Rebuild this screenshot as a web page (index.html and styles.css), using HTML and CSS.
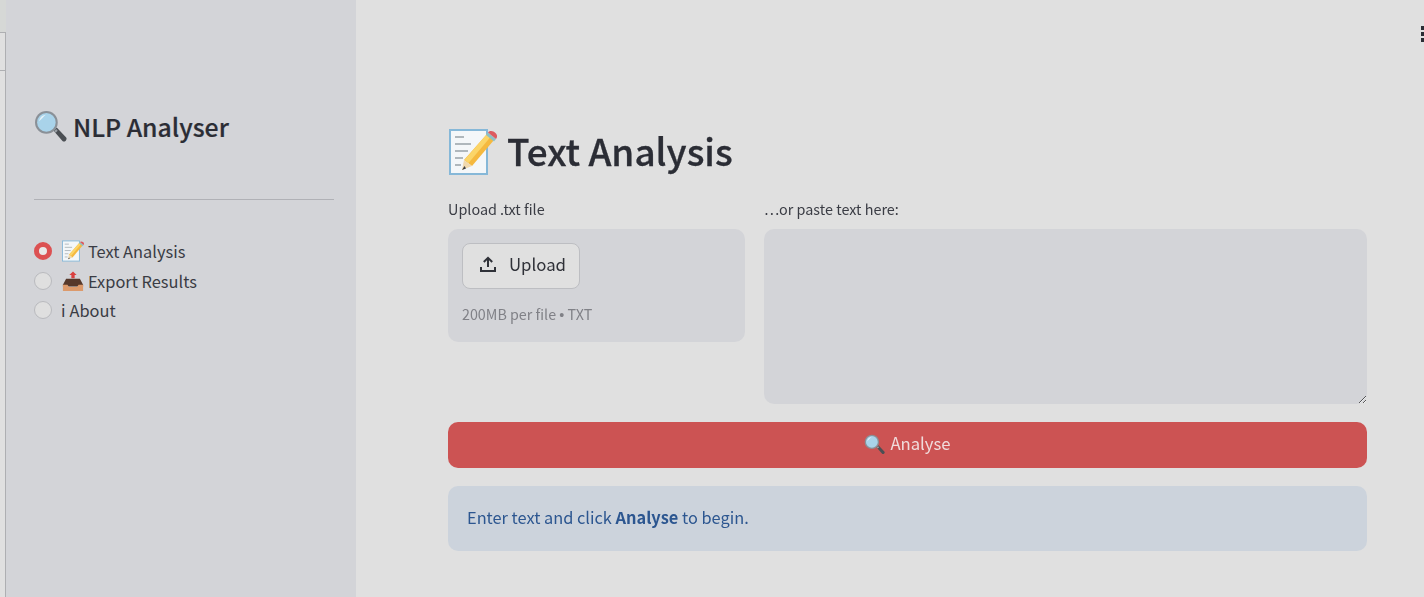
FILE: index.html
```html
<!DOCTYPE html>
<html lang="en">

<head>
    <meta charset="UTF-8">
    <title>NLP Analyser</title>
    <link rel="stylesheet" href="styles.css">
</head>

<body>

    <svg class="defs" width="0" height="0">
        <defs>
            <symbol id="lens" viewBox="0 0 32 32">
                <path d="M19 20l3-3 9 9.500c1 1 .6 2.300-.2 3.200-.9.900-2.300 1.200-3.200.3z" fill="#4b4f54"/>
                <path d="M19.500 20.500l2-2 1.500 1.500-2 2z" fill="#9aa0a6"/>
                <circle cx="12" cy="12" r="11" fill="#8a9097"/>
                <circle cx="12" cy="12" r="9" fill="#a9d3ea"/>
                <path d="M5 11c.5-3.500 3-6 6.500-6.300-2 1.600-4 3.800-6.500 6.300z" fill="#e4f2f9"/>
            </symbol>
            <symbol id="memo" viewBox="0 0 48 48">
                <rect x="1" y="2" width="37" height="44" fill="#f4f7f9" stroke="#86b8d8" stroke-width="2"/>
                <path d="M6 9h9M6 16h16M6 23h13M6 30h8M6 37h6" stroke="#98a2a8" stroke-width="1.500" fill="none"/>
                <path d="M38 6l7 6-22 26-8-6z" fill="#f5b93f"/>
                <path d="M38 6l3.500 3-22 26-4-3z" fill="#fbd568"/>
                <path d="M15 32l8 6-10 4z" fill="#f1d9ae"/>
                <path d="M15.500 38l-2.500 4 4-1.500z" fill="#3c3f44"/>
                <path d="M37 7l8 6.500 2-2.500-8-6.500z" fill="#8fc0c4"/>
                <path d="M39 4.500l8 6.500c1.500-2 1.500-4-.5-6s-5.500-3-7.500-.5z" fill="#dd5a5f"/>
            </symbol>
            <symbol id="outbox" viewBox="0 0 24 24">
                <path d="M12 1.500l4 4h-2.200v3.500h-3.600V5.500H8z" fill="#d9403f"/>
                <path d="M4.500 9.500h15l3.500 6.500v2H1v-2z" fill="#56382b"/>
                <path d="M1 16h5l1.500 2.500h9L18 16h5v7H1z" fill="#dc9a6c"/>
            </symbol>
        </defs>
    </svg>

    <div class="app">
        <div class="edge">
            <div class="edge-box"></div>
            <div class="edge-rest"></div>
        </div>

        <aside class="sidebar">
            <h2 class="brand">
                <svg class="emoji brand-icon"><use href="#lens"/></svg>
                NLP Analyser
            </h2>
            <hr class="rule">
            <div class="nav">
                <label class="nav-item">
                    <span class="radio radio-on"></span>
                    <svg class="emoji nav-icon"><use href="#memo"/></svg>
                    Text Analysis
                </label>
                <label class="nav-item">
                    <span class="radio"></span>
                    <svg class="emoji nav-icon"><use href="#outbox"/></svg>
                    Export Results
                </label>
                <label class="nav-item">
                    <span class="radio"></span>
                    <span class="info">i</span>
                    About
                </label>
            </div>
        </aside>

        <main class="main">
            <div class="kebab"><i></i><i></i><i></i></div>

            <h1 class="title">
                <svg class="emoji title-icon"><use href="#memo"/></svg>
                <span class="title-text">Text Analysis</span>
            </h1>

            <div class="inputs">
                <div class="upload-col">
                    <p class="field-label">Upload .txt file</p>
                    <div class="dropzone">
                        <button class="upload-btn">
                            <svg class="upload-icon" viewBox="0 0 16 16" fill="none" stroke="currentColor" stroke-width="2">
                                <path d="M8 11V2M3.800 6L8 1.800 12.200 6M1 11v4h14v-4"/>
                            </svg>
                            Upload
                        </button>
                        <p class="hint">200MB per file <span class="dot">•</span> TXT</p>
                    </div>
                </div>
                <div class="paste-col">
                    <p class="field-label">…or paste text here:</p>
                    <textarea class="paste"></textarea>
                </div>
            </div>

            <button class="analyse">
                <svg class="emoji analyse-icon"><use href="#lens"/></svg>
                Analyse
            </button>

            <div class="notice">Enter text and click <strong>Analyse</strong> to begin.</div>
        </main>
    </div>

</body>

</html>
```

FILE: styles.css
```css
* {
    box-sizing: border-box;
}

html,
body {
    height: 100%;
}

body {
    margin: 0;
    overflow: hidden;
    background: #e0e0e0;
    color: #2b2d35;
    font-family: "Noto Sans CJK SC", "Noto Sans", sans-serif;
}

.defs {
    position: absolute;
}

.emoji {
    flex: none;
}

.app {
    display: flex;
    height: 597px;
    filter: blur(0.4px);
}

.edge {
    display: flex;
    flex-direction: column;
    width: 6px;
    padding-top: 32px;
    background: #d6d8d6;
}

.edge-box {
    height: 39px;
    border: 1px solid #aeafb2;
    border-left: 0;
    background: #e0e0e0;
}

.edge-rest {
    flex: 1;
    border-right: 1px solid #aeafb2;
    background: #e0e0e0;
}

.sidebar {
    width: 350px;
    padding: 106px 22px 0 28px;
    background: #d3d4d8;
}

.brand {
    display: flex;
    align-items: center;
    gap: 6px;
    height: 40px;
    margin: 0;
    font-size: 24.800px;
    line-height: 40px;
    font-weight: 500;
    -webkit-text-stroke: 0.2px #2b2d35;
}

.brand-icon {
    width: 33px;
    height: 33px;
}

.rule {
    height: 1px;
    margin: 53px 0 39px;
    border: 0;
    background: #b0b1b6;
}

.nav {
    display: flex;
    flex-direction: column;
    gap: 5.500px;
}

.nav-item {
    display: flex;
    align-items: center;
    height: 24px;
    font-size: 16.400px;
    line-height: 24px;
    color: #3a3c44;
}

.radio {
    width: 18px;
    height: 18px;
    margin-right: 9px;
    border: 1px solid #b9babe;
    border-radius: 50%;
    background: #dfdfdf;
}

.radio-on {
    border: 5px solid #dc5152;
    background: #e9e9e9;
}

.nav-icon {
    width: 22px;
    height: 22px;
    margin: 0 4px 0 1px;
}

.info {
    margin-right: 4px;
}

.main {
    position: relative;
    flex: 1;
    min-width: 0;
    padding: 125px 57px 0 92px;
}

.kebab {
    position: absolute;
    top: 26px;
    right: 0;
    display: flex;
    flex-direction: column;
    gap: 2px;
}

.kebab i {
    width: 3px;
    height: 4px;
    background: #2b2d35;
}

.title {
    display: flex;
    align-items: center;
    gap: 10px;
    height: 54px;
    margin: 0 0 20px 1px;
    font-size: 36.900px;
    line-height: 54px;
    font-weight: 500;
    -webkit-text-stroke: 0.3px #2b2d35;
}

.title-text {
    margin-bottom: 4px;
}

.title-icon {
    width: 48px;
    height: 48px;
}

.inputs {
    display: flex;
    gap: 19px;
}

.upload-col {
    flex: none;
    width: 297px;
}

.paste-col {
    flex: 1;
    min-width: 0;
}

.field-label {
    height: 20px;
    margin: 0 0 10px;
    font-size: 14.400px;
    line-height: 20px;
    color: #3a3c44;
}

.dropzone {
    height: 113px;
    padding: 14px 14px 0;
    background: #d3d4d8;
    border-radius: 10px;
}

.upload-btn {
    display: flex;
    align-items: center;
    gap: 13px;
    width: 118px;
    height: 46px;
    padding: 0 0 4px 17px;
    background: #e0e0e0;
    border: 1px solid #bdbec2;
    border-radius: 8px;
    color: #2f3138;
    font-family: inherit;
    font-size: 16.800px;
}

.upload-icon {
    width: 16px;
    height: 16px;
}

.hint {
    margin: 14px 0 0;
    font-size: 14.300px;
    line-height: 22px;
    color: #808187;
}

.dot {
    font-family: "Liberation Sans", sans-serif;
}

.paste {
    display: block;
    width: 100%;
    height: 175px;
    background: #d3d4d8;
    border: 0;
    border-radius: 10px;
}

.analyse {
    display: flex;
    align-items: center;
    justify-content: center;
    gap: 5px;
    width: 100%;
    height: 46px;
    margin-top: 18px;
    padding: 0 0 5px;
    background: #cc5353;
    border: 0;
    border-radius: 10px;
    color: #f0dcdc;
    font-family: inherit;
    font-size: 16.700px;
}

.analyse-icon {
    width: 21px;
    height: 21px;
    margin-top: 3px;
}

.notice {
    height: 65px;
    margin-top: 18px;
    padding: 0 19px;
    background: #ccd3dc;
    border-radius: 10px;
    color: #2c5690;
    font-size: 16.380px;
    line-height: 63px;
}

.notice strong {
    font-weight: 700;
}
```
